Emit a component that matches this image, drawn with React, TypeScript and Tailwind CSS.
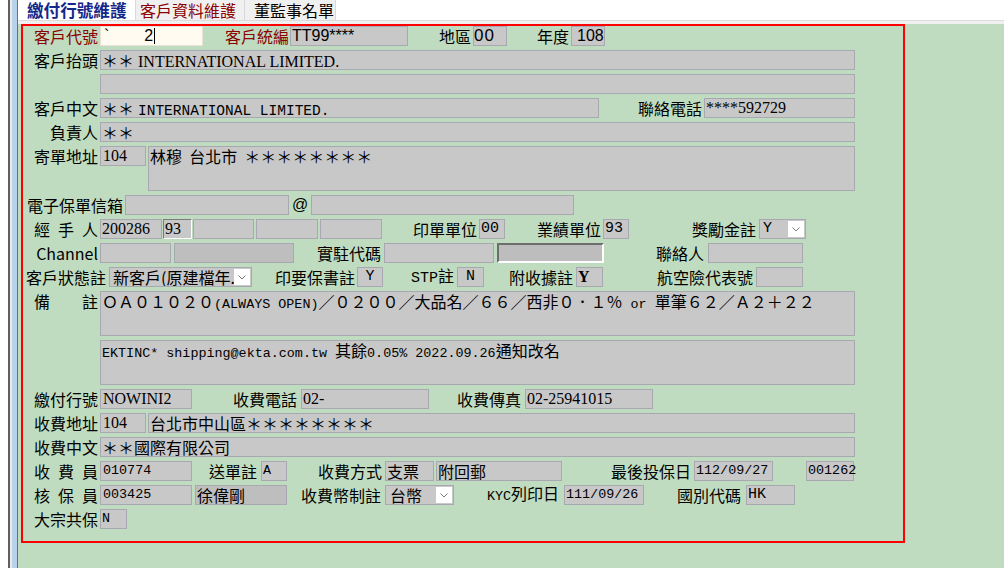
import type { ReactNode } from "react";
import clsx from "clsx";

const cn = clsx;

const cjk = "font-[family-name:'Noto_Sans_CJK_TC',sans-serif] text-[16px]";
const serif = "font-[family-name:'Liberation_Serif','Noto_Sans_CJK_TC',serif] text-[16px]";
const mono = "font-[family-name:'Liberation_Mono','Noto_Sans_CJK_TC',monospace] text-[13.4px]";
const arial = "font-[family-name:'Liberation_Sans',sans-serif] text-[16px]";

const red = "text-[#8b0000]";

function Lbl({ w, className, children }: { w: string; className?: string; children: ReactNode }) {
  return (
    <span className={cn("shrink-0 whitespace-nowrap text-right leading-5", cjk, w, className)}>{children}</span>
  );
}

function Spaced({ chars }: { chars: string[] }) {
  return (
    <span className={cn("ml-[11px] flex w-[64px] shrink-0 justify-between leading-5", cjk)}>
      {chars.map((c) => (
        <span key={c}>{c}</span>
      ))}
    </span>
  );
}

type Tone = "plain" | "dark" | "sunken" | "sunkenDark";

const tones: Record<Tone, string> = {
  plain: "bg-[#c8c8c8] border border-[#a8a8b0]",
  dark: "bg-[#bebebe] border border-[#a8a8b0]",
  sunken: "bg-[#c8c8c8] border border-t-[#7c7c7c] border-l-[#7c7c7c] border-r-white border-b-white",
  sunkenDark: "bg-[#bdbdbd] border-2 border-t-[#6e6e6e] border-l-[#6e6e6e] border-r-white border-b-white",
};

function Field({
  w,
  h = "h-5",
  tone = "plain",
  className,
  children,
}: {
  w: string;
  h?: string;
  tone?: Tone;
  className?: string;
  children?: ReactNode;
}) {
  return (
    <div className={cn("flex shrink-0 items-start text-black", tones[tone], w, h, className)}>
      <span className="whitespace-nowrap leading-[18px]">{children}</span>
    </div>
  );
}

function Combo({ w, className, children }: { w: string; className?: string; children: ReactNode }) {
  return (
    <div className={cn("flex h-5 shrink-0 items-center border border-[#a8a8b0] bg-[#c8c8c8]", w, className)}>
      <span className="min-w-0 flex-1 overflow-x-hidden whitespace-nowrap leading-[18px]">{children}</span>
      <span className="mr-px flex h-4 w-4 shrink-0 items-center justify-center bg-white">
        <svg width="8" height="5" viewBox="0 0 8 5" fill="none">
          <path d="M0.5 0.5 L4 4 L7.5 0.5" stroke="#7a7a7a" strokeWidth="1" />
        </svg>
      </span>
    </div>
  );
}

function Row({ h = "h-5", children }: { h?: string; children: ReactNode }) {
  return <div className={cn("flex items-center", h)}>{children}</div>;
}

export default function App() {
  return (
    <div className={cn("flex h-[568px] w-[1004px] overflow-hidden bg-white", cjk)}>
      {/* left window edge */}
      <div className="flex h-full w-[18px] shrink-0">
        <div className="w-[8px] bg-white" />
        <div className="w-[2px] bg-[#5f5f5f]" />
        <div className="w-[2px] bg-[#e9e9e9]" />
        <div className="w-[5px] bg-[#b9d1ea]" />
        <div className="w-px bg-[#6f6f6f]" />
      </div>

      <div className="flex min-w-0 flex-1 flex-col">
        {/* tabs */}
        <div className="flex h-5 shrink-0 bg-white leading-5">
          <div className="flex h-5 w-[117px] items-center whitespace-nowrap bg-white pl-[9px] text-[16.6px] font-bold text-[#15288a]">
            繳付行號維護
          </div>
          <div className={cn("flex h-5 w-[110px] items-center whitespace-nowrap border-x border-[#d9d9d9] bg-[#f0f0f0] pl-[4px]", red)}>
            客戶資料維護
          </div>
          <div className="flex h-5 w-[91px] items-center whitespace-nowrap border-r border-[#d9d9d9] bg-[#f0f0f0] pl-[9px] text-black">
            董監事名單
          </div>
        </div>
        <div className="h-1 shrink-0 border-t border-[#dcdcdc] bg-[#f0f0f0]" />

        {/* form */}
        <div className="flex-1 bg-[#c0dcc0]">
          <div className="ml-[3px] flex h-[519px] w-[884px] flex-col gap-1 border-2 border-[#ff0000] pb-3 text-black">
            <Row>
              <Lbl w="w-[75px]" className={red}>客戶代號</Lbl>
              <div className="ml-[2px] flex h-5 w-[103px] shrink-0 items-center border border-[#e6e2d6] bg-[#fffbf0] leading-[18px]">
                <span className={cn("pl-[3px]", arial)}>`</span>
                <span className={cn("ml-[35px]", arial)}>2</span>
                <span className="ml-px h-[16px] w-px bg-black" />
              </div>
              <Lbl w="w-[86px]" className={red}>客戶統編</Lbl>
              <Field w="w-[118px]" className={cn("ml-[1px] pl-[1px]", arial)}>TT99****</Field>
              <Lbl w="w-[63px]">地區</Lbl>
              <Field w="w-[34px]" className={cn("ml-[2px] text-[17px] tracking-[1px] text-[#1a1a40]", arial)}>00</Field>
              <Lbl w="w-[62px]">年度</Lbl>
              <Field w="w-[34px]" className={cn("ml-[2px] pl-[5px] text-[#1a1a40]", arial)}>108</Field>
            </Row>

            <Row>
              <Lbl w="w-[75px]">客戶抬頭</Lbl>
              <Field w="w-[755px]" className="ml-[2px] pl-px">
                <span className={cjk}>＊＊</span>
                <span className={cn("ml-[4px] text-[15px]", serif)}>INTERNATIONAL LIMITED.</span>
              </Field>
            </Row>

            <Row>
              <Field w="w-[755px]" className="ml-[77px]" />
            </Row>

            <Row>
              <Lbl w="w-[75px]">客戶中文</Lbl>
              <Field w="w-[499px]" className="ml-[2px] pl-px">
                <span className={cjk}>＊＊</span>
                <span className={cn("ml-[4px] text-[14.5px]", mono)}>INTERNATIONAL LIMITED.</span>
              </Field>
              <Lbl w="w-[103px]">聯絡電話</Lbl>
              <Field w="w-[151px]" className={cn("ml-[2px] pl-px", serif)}>****592729</Field>
            </Row>

            <Row>
              <Lbl w="w-[75px]">負責人</Lbl>
              <Field w="w-[755px]" className={cn("ml-[2px] pl-px", cjk)}>＊＊</Field>
            </Row>

            <div className="flex h-[45px] items-start">
              <Lbl w="w-[75px]">寄單地址</Lbl>
              <Field w="w-[46px]" className={cn("ml-[2px] pl-[2px]", serif)}>104</Field>
              <Field w="w-[707px]" h="h-[45px]" className={cn("ml-[2px] pl-px", cjk)}>
                林穆&nbsp;&nbsp;台北市&nbsp;&nbsp;＊＊＊＊＊＊＊＊
              </Field>
            </div>

            <Row>
              <Lbl w="w-[100px]">電子保單信箱</Lbl>
              <Field w="w-[164px]" className="ml-[2px]" />
              <span className={cn("w-[22px] shrink-0 pl-[3px] leading-5", arial)}>@</span>
              <Field w="w-[263px]" />
            </Row>

            <Row>
              <Spaced chars={["經", "手", "人"]} />
              <Field w="w-[62px]" className={cn("ml-[2px] pl-px", serif)}>200286</Field>
              <Field w="w-[29px]" tone="sunken" className={cn("ml-[1px] pl-px", serif)}>93</Field>
              <Field w="w-[61px]" className="ml-[1px]" />
              <Field w="w-[62px]" className="ml-[2px]" />
              <Field w="w-[62px]" className="ml-[2px]" />
              <Lbl w="w-[95px]">印單單位</Lbl>
              <Field w="w-[26px]" className={cn("ml-[2px] pl-px text-[15px]", mono)}>00</Field>
              <Lbl w="w-[96px]">業績單位</Lbl>
              <Field w="w-[26px]" className={cn("ml-[2px] pl-px text-[15px]", mono)}>93</Field>
              <Lbl w="w-[127px]">獎勵金註</Lbl>
              <Combo w="w-[47px]" className={cn("ml-[3px] pl-[3px] text-[15px]", mono)}>Y</Combo>
            </Row>

            <Row>
              <Lbl w="w-[75px]" className={cn("text-[14px]", mono)}>Channel</Lbl>
              <Field w="w-[71px]" className="ml-[2px]" />
              <Field w="w-[120px]" tone="dark" className="ml-[3px]" />
              <Lbl w="w-[87px]">實駐代碼</Lbl>
              <Field w="w-[110px]" className="ml-[3px]" />
              <Field w="w-[107px]" tone="sunkenDark" className="ml-[3px]" />
              <Lbl w="w-[100px]">聯絡人</Lbl>
              <Field w="w-[95px]" className="ml-[4px]" />
            </Row>

            <Row>
              <Lbl w="w-[83px]">客戶狀態註</Lbl>
              <Combo w="w-[143px]" className={cn("ml-[3px] pl-[3px]", cjk)}>新客戶(原建檔年.</Combo>
              <Lbl w="w-[103px]">印要保書註</Lbl>
              <Field w="w-[26px]" className={cn("ml-[2px] justify-center text-[15px]", mono)}>Y</Field>
              <Lbl w="w-[71px]">
                <span className={cn("text-[15px]", mono)}>STP</span>註
              </Lbl>
              <Field w="w-[27px]" className={cn("ml-[3px] justify-center text-[15px]", mono)}>N</Field>
              <Lbl w="w-[89px]">附收據註</Lbl>
              <Field w="w-[27px]" className={cn("ml-[3px] pl-px font-bold text-[#1f3a93]", serif)}>Y</Field>
              <Lbl w="w-[150px]">航空險代表號</Lbl>
              <Field w="w-[47px]" className="ml-[3px]" />
            </Row>

            <div className="flex h-[45px] items-start">
              <Spaced chars={["備", "註"]} />
              <Field w="w-[755px]" h="h-[45px]" className={cn("ml-[2px] pl-px", red)}>
                <span className={cjk}>ＯＡ０１０２０</span>
                <span className={mono}>(ALWAYS OPEN)</span>
                <span className={cjk}>／０２００／大品名／６６／西非０．１％</span>
                <span className={cn("whitespace-pre", mono)}> or </span>
                <span className={cjk}>單筆６２／Ａ２＋２２</span>
              </Field>
            </div>

            <div className="flex h-[45px] items-start">
              <Field w="w-[755px]" h="h-[45px]" className={cn("ml-[77px] pl-px", red)}>
                <span className={cn("whitespace-pre", mono)}>EKTINC* shipping@ekta.com.tw </span>
                <span className={cjk}>其餘</span>
                <span className={cn("whitespace-pre", mono)}>0.05% 2022.09.26</span>
                <span className={cjk}>通知改名</span>
              </Field>
            </div>

            <Row>
              <Lbl w="w-[75px]">繳付行號</Lbl>
              <Field w="w-[92px]" className={cn("ml-[2px] pl-[2px]", serif)}>NOWINI2</Field>
              <Lbl w="w-[105px]">收費電話</Lbl>
              <Field w="w-[128px]" className={cn("ml-[4px] pl-px", serif)}>02-</Field>
              <Lbl w="w-[92px]">收費傳真</Lbl>
              <Field w="w-[128px]" className={cn("ml-[4px] pl-px", serif)}>02-25941015</Field>
            </Row>

            <Row>
              <Lbl w="w-[75px]">收費地址</Lbl>
              <Field w="w-[46px]" className={cn("ml-[2px] pl-[2px]", serif)}>104</Field>
              <Field w="w-[707px]" className={cn("ml-[2px] pl-px", cjk)}>台北市中山區＊＊＊＊＊＊＊＊</Field>
            </Row>

            <Row>
              <Lbl w="w-[75px]">收費中文</Lbl>
              <Field w="w-[755px]" className={cn("ml-[2px] pl-px", cjk)}>＊＊國際有限公司</Field>
            </Row>

            <Row>
              <Spaced chars={["收", "費", "員"]} />
              <Field w="w-[92px]" className={cn("ml-[2px] pl-[2px]", mono)}>010774</Field>
              <Lbl w="w-[65px]">送單註</Lbl>
              <Field w="w-[26px]" className={cn("ml-[4px] pl-px", mono)}>A</Field>
              <Lbl w="w-[95px]">收費方式</Lbl>
              <Field w="w-[49px]" className={cn("ml-[3px] pl-px", cjk)}>支票</Field>
              <Field w="w-[126px]" className={cn("ml-[2px] pl-px", cjk)}>附回郵</Field>
              <Lbl w="w-[129px]">最後投保日</Lbl>
              <Field w="w-[79px]" className={cn("ml-[3px] pl-px", mono)}>112/09/27</Field>
              <Field w="w-[48px]" className={cn("ml-[33px] pl-px", mono)}>001262</Field>
            </Row>

            <Row>
              <Spaced chars={["核", "保", "員"]} />
              <Field w="w-[92px]" className={cn("ml-[2px] pl-[2px]", mono)}>003425</Field>
              <Field w="w-[92px]" tone="dark" className={cn("ml-[3px] pl-px", cjk)}>徐偉剛</Field>
              <Lbl w="w-[94px]">收費幣制註</Lbl>
              <Combo w="w-[69px]" className={cn("ml-[4px] pl-[4px]", cjk)}>台幣</Combo>
              <Lbl w="w-[105px]">
                <span className={mono}>KYC</span>列印日
              </Lbl>
              <Field w="w-[80px]" className={cn("ml-[5px] pl-px", mono)}>111/09/26</Field>
              <Lbl w="w-[97px]">國別代碼</Lbl>
              <Field w="w-[49px]" className={cn("ml-[5px] pl-px text-[15px]", mono)}>HK</Field>
            </Row>

            <Row>
              <Lbl w="w-[75px]">大宗共保</Lbl>
              <Field w="w-[27px]" className={cn("ml-[2px] pl-px", mono)}>N</Field>
            </Row>
          </div>
        </div>
      </div>
    </div>
  );
}
